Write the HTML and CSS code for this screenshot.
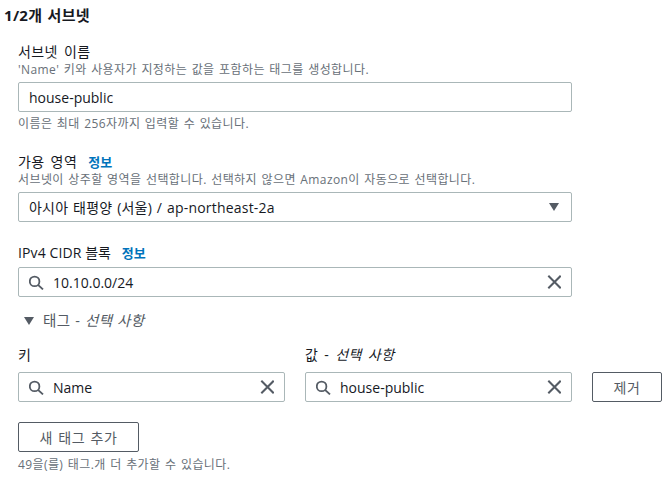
FILE: index.html
```html
<!DOCTYPE html>
<html lang="ko">
<head>
  <meta charset="UTF-8" />
  <title>서브넷 설정</title>
  <link rel="stylesheet" href="styles.css">
</head>
<body>
  <svg width="0" height="0" class="defs">
    <symbol id="search" viewBox="0 0 16 16"><circle cx="5.6" cy="7.4" r="4.8" fill="none" stroke="currentColor" stroke-width="1.8"/><path d="M9 10.8l5 4.6" stroke="currentColor" stroke-width="1.8" fill="none"/></symbol>
    <symbol id="clear" viewBox="0 0 16 16"><path d="M3.3 1.8l12.4 12.4M15.7 1.8L3.3 14.2" stroke="currentColor" stroke-width="2" fill="none"/></symbol>
  </svg>

  <h1>1/2개 서브넷</h1>

  <div class="form">
    <!-- Subnet name -->
    <div class="field name-field">
      <div class="label">서브넷 이름</div>
      <div class="hint">'Name' 키와 사용자가 지정하는 값을 포함하는 태그를 생성합니다.</div>
      <div class="input">house-public</div>
      <div class="hint after">이름은 최대 256자까지 입력할 수 있습니다.</div>
    </div>

    <!-- Availability zone -->
    <div class="field az-field">
      <div class="label az-label">가용 영역 <a class="info">정보</a></div>
      <div class="hint">서브넷이 상주할 영역을 선택합니다. 선택하지 않으면 Amazon이 자동으로 선택합니다.</div>
      <div class="input">
        <span class="grow region">아시아 태평양 (서울) / ap-northeast-2a</span>
        <span class="caret"></span>
      </div>
    </div>

    <!-- CIDR -->
    <div class="field cidr-field">
      <div class="label cidr-label">IPv4 CIDR 블록 <a class="info">정보</a></div>
      <div class="input search">
        <svg class="icon"><use href="#search"/></svg>
        <span class="grow">10.10.0.0/24</span>
        <svg class="icon"><use href="#clear"/></svg>
      </div>
    </div>

    <!-- Tags -->
    <div class="tags-head"><span class="caret"></span>태그 - <i>선택 사항</i></div>

    <div class="tag-row">
      <div class="tag-col">
        <div class="label">키</div>
        <div class="input search">
          <svg class="icon"><use href="#search"/></svg>
          <span class="grow">Name</span>
          <svg class="icon"><use href="#clear"/></svg>
        </div>
      </div>
      <div class="tag-col">
        <div class="label">값 - <i>선택 사항</i></div>
        <div class="input search">
          <svg class="icon"><use href="#search"/></svg>
          <span class="grow">house-public</span>
          <svg class="icon"><use href="#clear"/></svg>
        </div>
      </div>
      <button class="btn remove">제거</button>
    </div>

    <button class="btn add">새 태그 추가</button>
    <div class="hint tag-limit">49을(를) 태그.개 더 추가할 수 있습니다.</div>
  </div>
</body>
</html>
```

FILE: styles.css
```css
body {
  margin: 0;
  background: #fff;
  color: #16191f;
  font-family: "Open Sans", "Noto Sans CJK KR", sans-serif;
  font-size: 14px;
  overflow: hidden;
}

.defs {
  position: absolute;
}

h1 {
  margin: 0;
  padding: 5px 0 0 4px;
  font-size: 15px;
  line-height: 20px;
  font-weight: 700;
  letter-spacing: 0.3px;
  word-spacing: 1px;
}

.form {
  padding: 17px 0 0 18px;
  width: 644px;
}

.field {
  width: 554px;
}

.label {
  font-size: 14px;
  line-height: 20px;
  letter-spacing: 0.4px;
  word-spacing: 2px;
}

.cidr-label {
  letter-spacing: 0.1px;
  word-spacing: 0;
}

.hint {
  color: #687078;
  font-size: 12px;
  line-height: 16px;
  letter-spacing: 0.4px;
  word-spacing: 1px;
}

.hint.after {
  margin-top: 4px;
}

.info {
  color: #0073bb;
  font-size: 13px;
  font-weight: 700;
  margin-left: 7px;
  letter-spacing: 0;
}

.az-label .info {
  margin-left: 5px;
}

.input {
  box-sizing: border-box;
  display: flex;
  align-items: center;
  height: 30px;
  margin-top: 4px;
  padding: 0 10px;
  background: #fff;
  border: 1px solid #aab7b8;
  border-radius: 2px;
  font-size: 14px;
}

.grow {
  flex: 1;
}

.region {
  letter-spacing: 0.2px;
  word-spacing: 1px;
}

.input.search .grow {
  padding-left: 8px;
}

.icon {
  width: 16px;
  height: 16px;
  color: #545b64;
  flex: none;
}

.caret {
  width: 0;
  height: 0;
  border-left: 5.5px solid transparent;
  border-right: 5.5px solid transparent;
  border-top: 8px solid #545b64;
}

.az-field {
  margin-top: 20px;
}

.az-field .input {
  padding-right: 12px;
}

.cidr-field {
  margin-top: 21px;
}

.tags-head {
  display: flex;
  align-items: center;
  margin: 14px 0 0 6px;
  line-height: 20px;
  color: #545b64;
  white-space: pre;
  letter-spacing: 0.4px;
  word-spacing: 0.5px;
  font-size: 14.5px;
}

.tags-head .caret {
  margin-right: 9px;
}

.tag-row {
  display: flex;
  align-items: flex-end;
  gap: 20px;
  margin-top: 14px;
}

.tag-row .input {
  margin-top: 7px;
}

.tag-col {
  width: 267px;
}

.btn {
  box-sizing: border-box;
  height: 30px;
  background: #fff;
  border: 1px solid #545b64;
  border-radius: 2px;
  color: #545b64;
  font-family: inherit;
  font-size: 14px;
  padding: 0;
  letter-spacing: 0.6px;
  word-spacing: 1px;
}

.remove {
  width: 70px;
}

.add {
  display: block;
  width: 121px;
  margin-top: 20px;
}

.tag-limit {
  margin-top: 5px;
}
```
